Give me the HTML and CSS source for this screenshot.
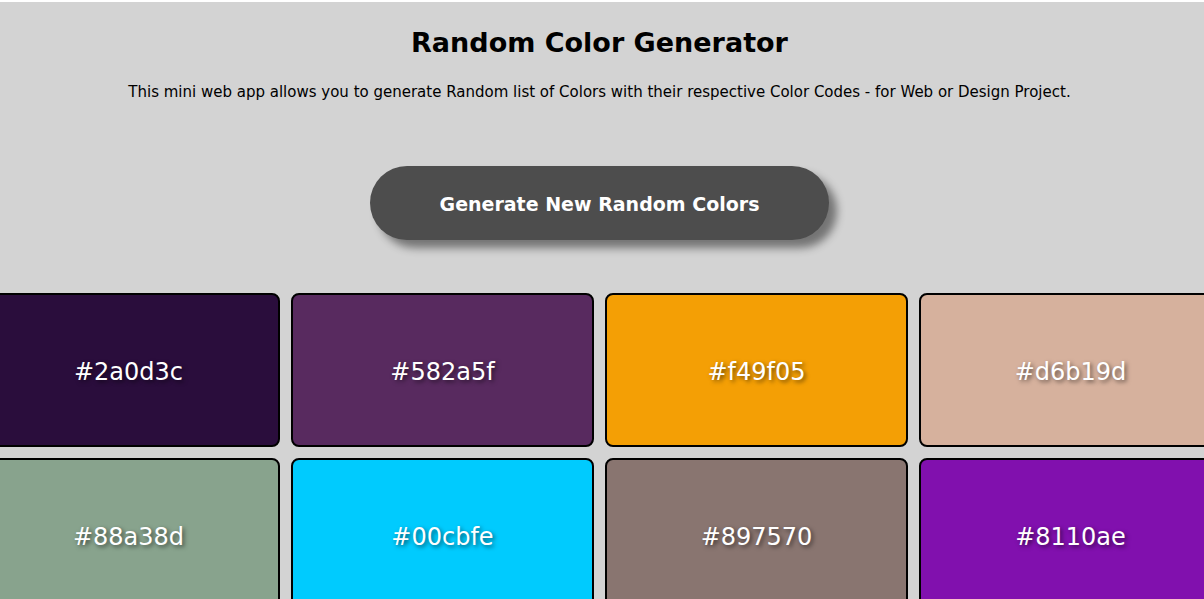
FILE: index.html
```html
<!DOCTYPE html>
<html lang="en">
<head>
<meta charset="utf-8">
<title>Random Color Generator</title>
<link rel="stylesheet" href="styles.css">
</head>
<body>
<main class="app">
  <header class="intro">
    <h1 class="title">Random Color Generator</h1>
    <p class="subtitle">This mini web app allows you to generate Random list of Colors with their respective Color Codes - for Web or Design Project.</p>
  </header>
  <div class="actions">
    <button class="generate" type="button">Generate New Random Colors</button>
  </div>
  <section class="palette">
    <div class="swatch" style="background:#2a0d3c"><span class="code">#2a0d3c</span></div>
    <div class="swatch" style="background:#582a5f"><span class="code">#582a5f</span></div>
    <div class="swatch" style="background:#f49f05"><span class="code">#f49f05</span></div>
    <div class="swatch" style="background:#d6b19d"><span class="code">#d6b19d</span></div>
    <div class="swatch" style="background:#88a38d"><span class="code">#88a38d</span></div>
    <div class="swatch" style="background:#00cbfe"><span class="code">#00cbfe</span></div>
    <div class="swatch" style="background:#897570"><span class="code">#897570</span></div>
    <div class="swatch" style="background:#8110ae"><span class="code">#8110ae</span></div>
  </section>
</main>
</body>
</html>
```

FILE: styles.css
```css
* { box-sizing: border-box; }

html, body {
  margin: 0;
  padding: 0;
  background: #ffffff;
  overflow: hidden;
}

body {
  padding-top: 2px;
  font-family: "Comic Sans MS", "DejaVu Sans", sans-serif;
  color: #000;
}

.app {
  background: #d3d3d3;
  min-height: 597px;
  padding: 21px 5px 0 0;
  overflow: hidden;
}

.intro {
  text-align: center;
}

.title {
  margin: 0;
  font-size: 27px;
  line-height: 40px;
  font-weight: bold;
}

.subtitle {
  margin: 19px 0 0;
  font-size: 15px;
  line-height: 20px;
}

.actions {
  display: flex;
  justify-content: center;
  margin-top: 64px;
}

.generate {
  width: 459px;
  height: 74px;
  padding-top: 3px;
  border: none;
  border-radius: 37px;
  background: #4d4d4d;
  color: #fff;
  font-family: inherit;
  font-weight: bold;
  font-size: 19px;
  box-shadow: 8px 8px 8px rgba(0, 0, 0, 0.45);
  cursor: pointer;
}

.palette {
  display: grid;
  grid-template-columns: repeat(4, 303px);
  grid-auto-rows: 154px;
  gap: 11px;
  justify-content: center;
  margin-top: 53px;
}

.swatch {
  border: 2px solid #000;
  border-radius: 8px;
  display: flex;
  align-items: center;
  justify-content: center;
}

.code {
  color: #fff;
  font-size: 24px;
  padding-top: 4px;
  text-shadow: 2px 2px 4px rgba(0, 0, 0, 0.55);
}
```
